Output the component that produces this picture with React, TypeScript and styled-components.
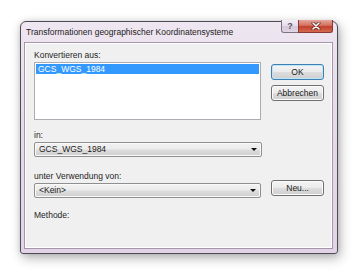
import styled, { createGlobalStyle } from "styled-components";

const GlobalStyle = createGlobalStyle`
  html, body {
    margin: 0;
    padding: 0;
    background: #ffffff;
  }
  body {
    font-family: "Liberation Sans", "Noto Sans", sans-serif;
    width: 359px;
    height: 275px;
    overflow: hidden;
  }
`;

const Page = styled.div`
  padding: 21px 0 0 20px;
`;

const Frame = styled.div`
  width: 318px;
  height: 233px;
  box-sizing: border-box;
  border: 1px solid #4e4a58;
  border-radius: 6px 6px 3px 3px;
  background: linear-gradient(180deg, #eee6f0 0%, #e6dbe9 40%, #e2d4e6 100%);
  box-shadow: 2px 4px 12px rgba(0, 0, 0, 0.3), 0 0 5px rgba(0, 0, 0, 0.12);
  display: flex;
  flex-direction: column;
  padding: 0 4px 4px 3px;
`;

const TitleBar = styled.div`
  height: 20px;
  display: flex;
  align-items: flex-start;
  justify-content: space-between;
`;

const Title = styled.div`
  font-size: 8.5px;
  color: #1c1c1c;
  line-height: 11px;
  padding: 5px 0 0 2px;
  white-space: nowrap;
`;

const CaptionButtons = styled.div`
  display: flex;
  margin-top: -2px;
`;

const CaptionButton = styled.div<{ $close?: boolean }>`
  width: ${({ $close }) => ($close ? 35 : 18)}px;
  height: 13px;
  box-sizing: border-box;
  border: 1px solid ${({ $close }) => ($close ? "#8a3a32" : "#7c7484")};
  border-top: none;
  border-radius: ${({ $close }) => ($close ? "0 0 3px 0" : "0 0 0 3px")};
  margin-left: ${({ $close }) => ($close ? "-1px" : "0")};
  background: ${({ $close }) =>
    $close
      ? "linear-gradient(180deg, #e4a79c 0%, #d5705f 45%, #c2402c 55%, #d46a4e 100%)"
      : "linear-gradient(180deg, #f4eef6 0%, #e4dbe8 50%, #d4c8da 55%, #e0d6e4 100%)"};
  display: flex;
  align-items: center;
  justify-content: center;
  font-size: 9px;
  font-weight: bold;
  color: #5a5260;
  line-height: 1;
`;

const Content = styled.div`
  flex: 1;
  background: #f0f0f0;
  border: 1px solid #a596ad;
  box-shadow: inset 0 0 0 1px #ffffff;
  padding: 7px 8px 0 9px;
  display: flex;
  flex-direction: column;
`;

const Label = styled.div<{ $gap?: number }>`
  font-size: 8.5px;
  line-height: 11px;
  color: #1e1e1e;
  margin-top: ${({ $gap }) => $gap ?? 0}px;
  white-space: nowrap;
`;

const TopRow = styled.div`
  display: flex;
  gap: 10px;
`;

const LeftColumn = styled.div`
  width: 228px;
  display: flex;
  flex-direction: column;
`;

const ButtonColumn = styled.div`
  display: flex;
  flex-direction: column;
  gap: 5px;
  padding-top: 14px;
`;

const ListBox = styled.div`
  margin-top: 1px;
  height: 58px;
  box-sizing: border-box;
  background: #ffffff;
  border: 1px solid #abadb3;
  padding: 1px;
`;

const ListItem = styled.div<{ $selected?: boolean }>`
  font-size: 8.5px;
  line-height: 10px;
  padding: 0 2px;
  color: ${({ $selected }) => ($selected ? "#ffffff" : "#000000")};
  background: ${({ $selected }) => ($selected ? "#3399ff" : "transparent")};
`;

const Button = styled.div<{ $default?: boolean }>`
  width: 53px;
  height: 16px;
  box-sizing: border-box;
  border: 1px solid ${({ $default }) => ($default ? "#3c7fb1" : "#707070")};
  border-radius: 3px;
  background: linear-gradient(180deg, #f4f4f4 0%, #ebebeb 48%, #dddddd 52%, #cfcfcf 100%);
  box-shadow: inset 0 0 0 1px ${({ $default }) => ($default ? "#bfe6f8" : "#fbfbfb")};
  font-size: 8.5px;
  line-height: 14px;
  text-align: center;
  color: #1a1a1a;
`;

const Combo = styled.div`
  position: relative;
  width: 228px;
  height: 15px;
  margin-top: 1px;
  box-sizing: border-box;
  border: 1px solid #8e8f8f;
  border-radius: 2px;
  background: linear-gradient(180deg, #f2f2f2 0%, #ebebeb 48%, #dddddd 52%, #cfcfcf 100%);
  box-shadow: inset 0 0 0 1px #fafafa;
  font-size: 8.5px;
  line-height: 13px;
  padding-left: 4px;
  color: #1a1a1a;
`;

const Arrow = styled.span`
  position: absolute;
  right: 4px;
  top: 5px;
  width: 0;
  height: 0;
  border-left: 3px solid transparent;
  border-right: 3px solid transparent;
  border-top: 3px solid #101010;
`;

const ComboRow = styled.div`
  display: flex;
  gap: 10px;
  align-items: flex-start;
`;

const RowButton = styled(Button)`
  margin-top: -2px;
`;

export default function App() {
  return (
    <>
      <GlobalStyle />
      <Page>
        <Frame>
          <TitleBar>
            <Title>Transformationen geographischer Koordinatensysteme</Title>
            <CaptionButtons>
              <CaptionButton>?</CaptionButton>
              <CaptionButton $close>
                <svg width="10" height="8" viewBox="0 0 10 8">
                  <path d="M2 1 L8 7 M8 1 L2 7" stroke="#5a2018" strokeWidth="3" strokeLinecap="round" />
                  <path d="M2 1 L8 7 M8 1 L2 7" stroke="#ffffff" strokeWidth="1.6" strokeLinecap="round" />
                </svg>
              </CaptionButton>
            </CaptionButtons>
          </TitleBar>
          <Content>
            <TopRow>
              <LeftColumn>
                <Label>Konvertieren aus:</Label>
                <ListBox>
                  <ListItem $selected>GCS_WGS_1984</ListItem>
                </ListBox>
              </LeftColumn>
              <ButtonColumn>
                <Button $default>OK</Button>
                <Button>Abbrechen</Button>
              </ButtonColumn>
            </TopRow>
            <Label $gap={10}>in:</Label>
            <Combo>
              GCS_WGS_1984
              <Arrow />
            </Combo>
            <Label $gap={14}>unter Verwendung von:</Label>
            <ComboRow>
              <Combo>
                &lt;Kein&gt;
                <Arrow />
              </Combo>
              <RowButton>Neu...</RowButton>
            </ComboRow>
            <Label $gap={12}>Methode:</Label>
          </Content>
        </Frame>
      </Page>
    </>
  );
}
